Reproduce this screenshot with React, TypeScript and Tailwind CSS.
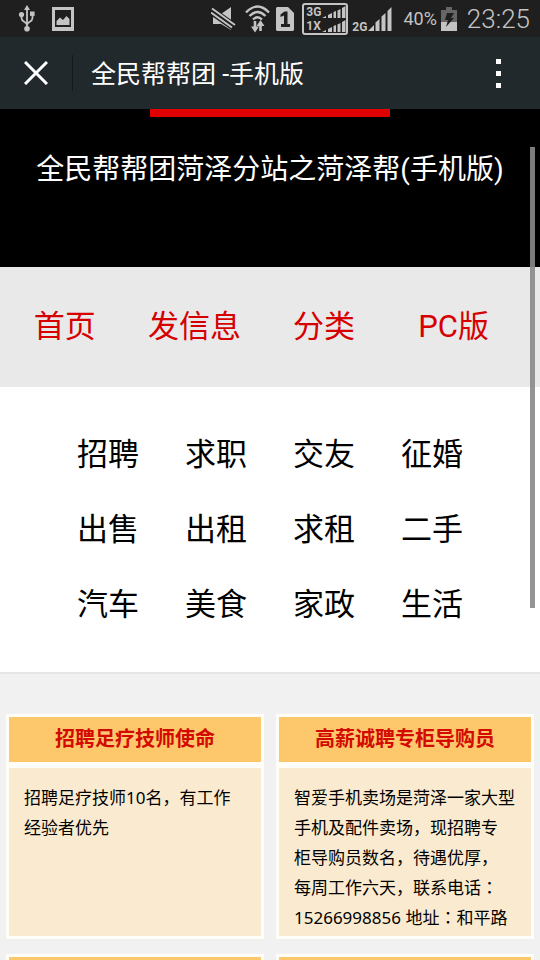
import React from "react";

const navItems = ["首页", "发信息", "分类", "PC版"];

const categories = [
  "招聘", "求职", "交友", "征婚",
  "出售", "出租", "求租", "二手",
  "汽车", "美食", "家政", "生活",
];

type Post = { title: string; lines: string[] };

const posts: Post[] = [
  { title: "招聘足疗技师使命", lines: ["招聘足疗技师10名，有工作", "经验者优先"] },
  {
    title: "高薪诚聘专柜导购员",
    lines: [
      "智爱手机卖场是菏泽一家大型",
      "手机及配件卖场，现招聘专",
      "柜导购员数名，待遇优厚，",
      "每周工作六天，联系电话：",
      "15266998856 地址：和平路",
    ],
  },
  { title: "", lines: [] },
  { title: "", lines: [] },
];

function UsbIcon() {
  return (
    <svg width="18" height="27" viewBox="0 0 18 27" fill="none" stroke="#c4c4c4" strokeWidth="1.8" aria-hidden="true">
      <path d="M9 4V23M3.5 10V13C3.5 17 9 17 9 20M14.5 9V13C14.5 17 9 17 9 20" />
      <path d="M9 0L12 5H6Z" fill="#c4c4c4" stroke="none" />
      <circle cx="3.5" cy="9.5" r="2.6" fill="#c4c4c4" stroke="none" />
      <rect x="12" y="6.5" width="4.6" height="4.4" fill="#c4c4c4" stroke="none" />
      <circle cx="9" cy="23.7" r="2.8" fill="#c4c4c4" stroke="none" />
    </svg>
  );
}

function PictureIcon() {
  return (
    <svg width="22" height="24" viewBox="0 0 22 24" aria-hidden="true">
      <path fillRule="evenodd" d="M0 0H22V24H0ZM3 3V20H19V3Z" fill="#c4c4c4" />
      <path d="M4.500 18V14L8 10.500L11 13L14.500 9L17.500 12V18Z" fill="#c4c4c4" />
    </svg>
  );
}

function MuteIcon() {
  return (
    <svg width="25" height="24" viewBox="0 0 25 24" aria-hidden="true">
      <path d="M2 7H10L20 0V23L10 17H2Z" fill="#c4c4c4" />
      <path d="M0 3.500L24 20.500" stroke="#1f1f1f" strokeWidth="8" />
      <path d="M1 1.500L24 18M0 5.500L21 20.500" stroke="#c4c4c4" strokeWidth="2" />
    </svg>
  );
}

function WifiIcon() {
  return (
    <svg width="25" height="28" viewBox="0 0 25 28" fill="none" stroke="#c4c4c4" strokeWidth="2.400" aria-hidden="true">
      <path d="M1 7.500Q12.500 -4.500 24 7.500M4.500 11Q12.500 3 20.500 11M8 14.500Q12.500 10 17 14.500" />
      <path d="M10 16V23M15.500 26V20" strokeWidth="2.600" />
      <path d="M6 21.500H14L10 27.500ZM11.500 21H19.500L15.500 15Z" fill="#c4c4c4" stroke="none" />
    </svg>
  );
}

function SimIcon() {
  return (
    <svg width="18" height="24" viewBox="0 0 18 24" aria-hidden="true">
      <path d="M1 0H12L18 6V23L17 24H1L0 23V1Z" fill="#c4c4c4" />
      <path d="M4.500 7.500L8.500 4.500H11.500V17H14V20H5V17H8V8.500L4.500 10Z" fill="#1f1f1f" />
    </svg>
  );
}

function SmallSignal() {
  return (
    <svg width="24" height="12" viewBox="0 0 24 12" fill="#c4c4c4" aria-hidden="true">
      <path d="M0 12L4 10V12ZM6 12V9L10 7V12ZM11.500 12V6L14 5V12ZM15.500 12V4.500L18.500 3V12ZM20 12V2L23.500 0V12Z" />
    </svg>
  );
}

function Signal() {
  return (
    <svg width="24" height="24" viewBox="0 0 24 24" fill="#c4c4c4" aria-hidden="true">
      <path d="M0 24L6 18V24ZM7.500 24V15.500L11.500 12V24ZM13.500 24V9.500L17.500 6V24ZM19.500 24V4L23.500 0V24Z" />
    </svg>
  );
}

function BatteryIcon() {
  return (
    <svg width="16" height="24" viewBox="0 0 16 24" aria-hidden="true">
      <path d="M5 0H11V3H16V15H0V3H5Z" fill="#666666" />
      <path d="M0 15H16V24H0Z" fill="#c4c4c4" />
      <path d="M6 6H13L10 11H13L5 20L7 13H4Z" fill="#1f1f1f" />
    </svg>
  );
}

function StatusBar() {
  return (
    <div className="flex h-[37px] shrink-0 items-center bg-[#1f1f1f] pl-[18px] pr-[10px] text-[#c4c4c4]">
      <UsbIcon />
      <span className="w-4" />
      <PictureIcon />
      <div className="ml-auto flex items-center">
        <MuteIcon />
        <span className="w-[9px]" />
        <WifiIcon />
        <span className="w-1.5" />
        <SimIcon />
        <div className="ml-2 flex h-8 w-[46px] flex-col justify-center rounded-[3px] border-2 border-[#c4c4c4] pl-0.5 text-[12px] font-bold leading-[14px]">
          <div className="flex items-center justify-between">
            3G
            <SmallSignal />
          </div>
          <div className="flex items-center justify-between">
            1X
            <SmallSignal />
          </div>
        </div>
        <span className="ml-1 mr-px self-end text-[12px] font-bold leading-4">2G</span>
        <Signal />
        <span className="ml-[11px] text-[18px] leading-6">40%</span>
        <span className="w-1" />
        <BatteryIcon />
        <span className="ml-[10px] text-[26px] font-light leading-8">23:25</span>
      </div>
    </div>
  );
}

function TitleBar() {
  return (
    <header className="flex h-[72px] shrink-0 items-center bg-[#22292c] pl-6 pr-9 text-white">
      <button type="button" aria-label="关闭">
        <svg width="24" height="24" viewBox="0 0 24 24" stroke="white" strokeWidth="3" aria-hidden="true">
          <path d="M1 1L23 23M23 1L1 23" />
        </svg>
      </button>
      <div className="ml-6 h-9 w-px bg-[#14191b]" />
      <h1 className="ml-[18px] pt-1 text-[25px] leading-8">全民帮帮团 -手机版</h1>
      <button type="button" aria-label="更多" className="ml-auto flex w-3 flex-col items-center gap-[7px]">
        <span className="size-[5px] bg-white" />
        <span className="size-[5px] bg-white" />
        <span className="size-[5px] bg-white" />
      </button>
    </header>
  );
}

/* Full-width colons are set from the face that centres them in their cell. */
function BodyLine({ text }: { text: string }) {
  return (
    <>
      {text.split(/(：)/).map((part, index) =>
        part === "：" ? (
          <span key={index} lang="ja" className="font-['Noto_Sans_CJK_JP',sans-serif] leading-none">
            {part}
          </span>
        ) : (
          part
        ),
      )}
      <br />
    </>
  );
}

function PostCard({ post }: { post: Post }) {
  return (
    <article className="border-[3px] border-[#fffdf8] bg-[#fffdf8]">
      <h3 className="h-[45px] bg-[#fdc86c] text-center text-[20px] font-bold leading-[44px] text-[#d20a00]">
        {post.title}
      </h3>
      <p className="mt-1.5 h-[168px] overflow-hidden whitespace-nowrap bg-[#faebd0] pl-[15px] pt-[15px] font-['Noto_Sans','Noto_Sans_CJK_SC',sans-serif] text-[17px] leading-[30px] text-black">
        {post.lines.map((line) => (
          <BodyLine key={line} text={line} />
        ))}
      </p>
    </article>
  );
}

export default function App() {
  return (
    <div className="flex h-screen flex-col overflow-hidden bg-[#f1f1f1] font-[Roboto,'Noto_Sans_CJK_SC',sans-serif]" lang="zh-CN">
      <StatusBar />
      <TitleBar />
      <main className="relative min-h-0 flex-1 overflow-hidden">
        <section className="h-[158px] bg-black">
          <div className="mx-auto h-2 w-60 bg-[#e00000]" />
          <h2 className="pt-[33px] text-center text-[28px] leading-10 text-white">全民帮帮团菏泽分站之菏泽帮(手机版)</h2>
        </section>
        <nav className="flex h-[120px] items-center bg-[#e9e9e9]">
          {navItems.map((item) => (
            <a key={item} href="#" className="w-[24%] text-center text-[31px] leading-10 text-[#d60000]">
              {item}
            </a>
          ))}
        </nav>
        <section className="grid grid-cols-4 border-b-2 border-[#e6e6e6] bg-white px-[10%] py-[30px]">
          {categories.map((item) => (
            <a key={item} href="#" className="text-center text-[31px] leading-[75px] text-black">
              {item}
            </a>
          ))}
        </section>
        <section className="grid grid-cols-2 gap-x-3 gap-y-[15px] px-1.5 pt-10">
          {posts.map((post, index) => (
            <PostCard key={index} post={post} />
          ))}
        </section>
        <div className="absolute right-[5px] top-[38px] h-[461px] w-[5px] bg-[#888888]/90" />
      </main>
    </div>
  );
}
